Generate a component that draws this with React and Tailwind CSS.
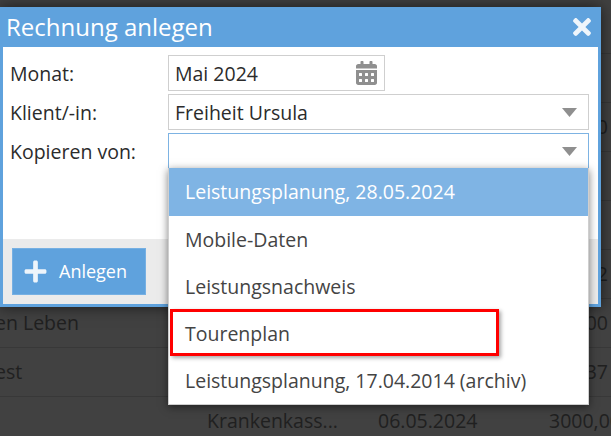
import { FaCalendarAlt, FaPlus, FaTimes } from 'react-icons/fa';

const rows = [
    { id: 1 },
    { id: 2 },
    { id: 3, right: '0' },
    { id: 4 },
    { id: 5 },
    { id: 6, right: '2' },
    { id: 7, left: 'en Leben', right: '3000' },
    { id: 8, left: 'est', right: '1237' },
    { id: 9, name: 'Krankenkass...', date: '06.05.2024', amount: '3000,00' },
];

const options = ['Mobile-Daten', 'Leistungsnachweis', 'Tourenplan', 'Leistungsplanung, 17.04.2014 (archiv)'];

function Caret() {
    return (
        <svg width="15" height="9" viewBox="0 0 15 9" className="shrink-0">
            <path d="M0 0h15L7.5 9z" fill="#8f8f8f" />
        </svg>
    );
}

function Field({ label, children }) {
    return (
        <div className="flex items-center h-9">
            <div className="w-[165px] pl-[7px] pt-px shrink-0">{label}</div>
            {children}
        </div>
    );
}

export default function App() {
    return (
        <div
            className="relative w-[611px] h-[436px] overflow-hidden bg-[#414141] text-[19.5px] text-[#2b2b2b]"
            style={{ fontFamily: '"Open Sans", sans-serif' }}
        >
            {/* table behind the dialog */}
            <div className="pt-[5px] text-[#202020]">
                {rows.map((row) => (
                    <div key={row.id} className="flex items-center h-[49px] border-b border-[#383838] whitespace-nowrap">
                        <div className="w-[207px] shrink-0 -ml-[5px]">{row.left}</div>
                        {row.name ? (
                            <>
                                <div className="w-[171px] shrink-0 ml-[5px]">{row.name}</div>
                                <div className="w-[171px] shrink-0">{row.date}</div>
                                <div>{row.amount}</div>
                            </>
                        ) : (
                            <div className="flex-1 text-right pr-[3px]">{row.right}</div>
                        )}
                    </div>
                ))}
            </div>

            {/* dialog */}
            <div className="absolute left-0 top-[7px] w-[601px] h-[300px] flex flex-col bg-[#5fa2dd] px-[3px] pb-[3px] shadow-[0_0_14px_rgba(0,0,0,0.6)]">
                <div className="h-10 shrink-0 flex items-center justify-between pl-[3px] pr-[2px] text-white">
                    <span className="text-[24px]">Rechnung anlegen</span>
                    <FaTimes className="w-[26px] h-[26px] mr-[1px] text-[#eef5fb]" />
                </div>
                <div className="flex-1 bg-white pt-2 flex flex-col gap-[3px]">
                    <Field label="Monat:">
                        <div className="w-[217px] h-9 border border-[#cfcfcf] flex items-center justify-between pl-[6px] pr-[7px]">
                            <span className="pt-px">Mai 2024</span>
                            <FaCalendarAlt className="w-[21px] h-[24px] text-[#8f8f8f]" />
                        </div>
                    </Field>
                    <Field label="Klient/-in:">
                        <div className="w-[421px] h-9 border border-[#cfcfcf] flex items-center justify-between pl-[6px] pr-[11px]">
                            <span className="pt-px">Freiheit Ursula</span>
                            <Caret />
                        </div>
                    </Field>
                    <Field label="Kopieren von:">
                        <div className="w-[421px] h-9 border border-[#7db3e3] flex items-center justify-end pr-[11px]">
                            <Caret />
                        </div>
                    </Field>
                </div>
                <div className="h-[65px] shrink-0 bg-[#ebebeb] pl-[9px] pt-[9px]">
                    <button className="w-[134px] h-[47px] bg-[#5fa2dd] border border-[#76b0e3] flex items-center pl-[10px] gap-[11px] text-white text-[18px]">
                        <FaPlus className="w-[25px] h-[25px] text-[#eef5fb]" />
                        <span>Anlegen</span>
                    </button>
                </div>
            </div>

            {/* open dropdown */}
            <div className="absolute left-[168px] top-[168px] w-[421px] h-[237px] bg-white border-x border-b border-[#cfcfcf] shadow-[0_2px_8px_rgba(0,0,0,0.5)]">
                <div className="h-[48px] flex items-center pl-4 bg-[#7fb4e4] text-white">Leistungsplanung, 28.05.2024</div>
                {options.map((option) => (
                    <div key={option} className="h-[47px] flex items-center pl-4 text-[#444]">
                        {option}
                    </div>
                ))}
            </div>

            {/* red highlight */}
            <div className="absolute left-[170px] top-[309px] w-[329px] h-[47px] border-[3px] border-[#ff0000] shadow-[2px_2px_4px_rgba(0,0,0,0.35)]" />
        </div>
    );
}
